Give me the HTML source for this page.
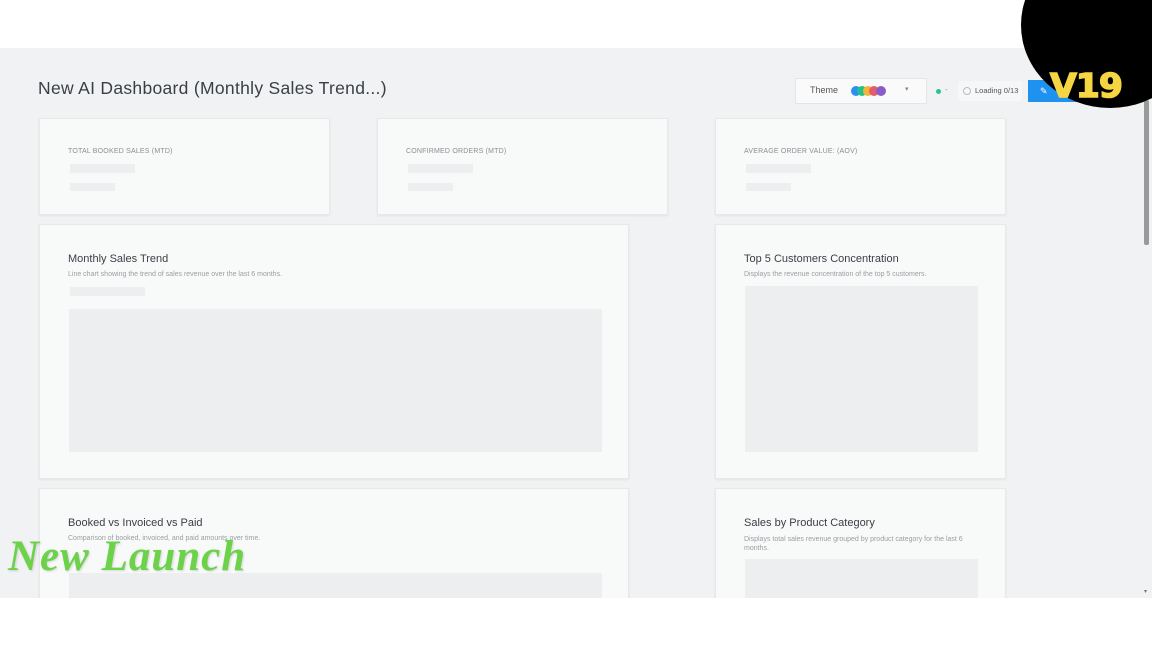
<!DOCTYPE html>
<html><head><style>
*{margin:0;padding:0;box-sizing:border-box}
body{width:1152px;height:648px;overflow:hidden;background:#fff;font-family:"Liberation Sans",sans-serif;position:relative}
.main{position:absolute;left:0;top:48px;width:1152px;height:550px;background:#f1f2f3;overflow:hidden}
.card{position:absolute;background:#f8f9f9;border:1px solid #e6e8ea;box-shadow:0 1px 2px rgba(0,0,0,.06)}
.lbl{position:absolute;font-size:7px;color:#8a8f94;letter-spacing:.2px}
.sk{position:absolute;background:#eceeef}
.t{position:absolute;font-size:11px;color:#3b4046}
.d{position:absolute;font-size:7px;color:#9a9fa4}
</style></head><body>
<div class="main">
<div style="position:absolute;left:38px;top:30px;font-size:17.5px;color:#3a3f45;letter-spacing:.3px">New AI Dashboard (Monthly Sales Trend...)</div>
<div style="position:absolute;left:795px;top:30px;width:132px;height:26px;background:#fafafa;border:1px solid #e3e5e7"></div>
<div style="position:absolute;left:810px;top:37px;font-size:9px;color:#555">Theme</div>
<div style="position:absolute;left:851px;top:38px;width:10px;height:10px;border-radius:50%;background:#2e8ff0"></div>
<div style="position:absolute;left:857px;top:38px;width:10px;height:10px;border-radius:50%;background:#22c38a"></div>
<div style="position:absolute;left:863px;top:38px;width:10px;height:10px;border-radius:50%;background:#f4b43a"></div>
<div style="position:absolute;left:869px;top:38px;width:10px;height:10px;border-radius:50%;background:#e35d6a"></div>
<div style="position:absolute;left:876px;top:38px;width:10px;height:10px;border-radius:50%;background:#8a5cc8"></div>
<div style="position:absolute;left:905px;top:37px;font-size:7px;color:#888">▾</div>
<div style="position:absolute;left:936px;top:41px;width:5px;height:5px;border-radius:50%;background:#2cc38a"></div>
<div style="position:absolute;left:945px;top:37px;font-size:8px;color:#999">-</div>
<div style="position:absolute;left:958px;top:33px;width:64px;height:20px;background:#f6f7f8;border-radius:3px"></div>
<div style="position:absolute;left:963px;top:39px;width:8px;height:8px;border-radius:50%;border:1px solid #bbb"></div>
<div style="position:absolute;left:975px;top:38px;font-size:7.5px;color:#555">Loading 0/13</div>
<div style="position:absolute;left:1028px;top:32px;width:60px;height:22px;background:#1f92f0"></div>
<div style="position:absolute;left:1040px;top:38px;font-size:9px;color:#fff">✎</div>

<div class="card" style="left:39px;top:70px;width:291px;height:97px"></div>
<div class="lbl" style="left:68px;top:100px">TOTAL BOOKED SALES (MTD)</div>
<div class="sk" style="left:70px;top:116px;width:65px;height:9px"></div>
<div class="sk" style="left:70px;top:135px;width:45px;height:8px"></div>
<div class="card" style="left:377px;top:70px;width:291px;height:97px"></div>
<div class="lbl" style="left:406px;top:100px">CONFIRMED ORDERS (MTD)</div>
<div class="sk" style="left:408px;top:116px;width:65px;height:9px"></div>
<div class="sk" style="left:408px;top:135px;width:45px;height:8px"></div>
<div class="card" style="left:715px;top:70px;width:291px;height:97px"></div>
<div class="lbl" style="left:744px;top:100px">AVERAGE ORDER VALUE: (AOV)</div>
<div class="sk" style="left:746px;top:116px;width:65px;height:9px"></div>
<div class="sk" style="left:746px;top:135px;width:45px;height:8px"></div>

<div class="card" style="left:39px;top:176px;width:590px;height:255px"></div>
<div class="t" style="left:68px;top:205px">Monthly Sales Trend</div>
<div class="d" style="left:68px;top:223px">Line chart showing the trend of sales revenue over the last 6 months.</div>
<div class="sk" style="left:70px;top:239px;width:75px;height:9px"></div>
<div class="sk" style="left:69px;top:261px;width:533px;height:143px"></div>
<div class="card" style="left:715px;top:176px;width:291px;height:255px"></div>
<div class="t" style="left:744px;top:205px">Top 5 Customers Concentration</div>
<div class="d" style="left:744px;top:223px">Displays the revenue concentration of the top 5 customers.</div>
<div class="sk" style="left:745px;top:238px;width:233px;height:166px"></div>

<div class="card" style="left:39px;top:440px;width:590px;height:130px"></div>
<div class="t" style="left:68px;top:469px">Booked vs Invoiced vs Paid</div>
<div class="d" style="left:68px;top:487px">Comparison of booked, invoiced, and paid amounts over time.</div>
<div class="sk" style="left:69px;top:525px;width:533px;height:40px"></div>
<div class="card" style="left:715px;top:440px;width:291px;height:130px"></div>
<div class="t" style="left:744px;top:469px">Sales by Product Category</div>
<div class="d" style="left:744px;top:487px;width:240px;line-height:9px">Displays total sales revenue grouped by product category for the last 6 months.</div>
<div class="sk" style="left:745px;top:511px;width:233px;height:50px"></div>

<div style="position:absolute;left:1144px;top:52px;width:5px;height:145px;background:#9a9a9a;border-radius:2px"></div>
<div style="position:absolute;left:1144px;top:540px;font-size:6px;color:#777">▾</div>
</div>
<div style="position:absolute;left:1021px;top:-58px;width:178px;height:166px;border-radius:50%;background:#000"></div>
<div style="position:absolute;left:1050px;top:70px;font-size:33px;font-weight:900;color:#f5d542;font-family:'DejaVu Sans',sans-serif;letter-spacing:-1px;line-height:32px;-webkit-text-stroke:1.5px #f5d542;transform:scaleX(1.05);transform-origin:left">V19</div>
<div style="position:absolute;left:8px;top:532px;font-size:43px;font-style:italic;font-weight:bold;color:#6bd24a;font-family:'Liberation Serif',serif;line-height:50px;letter-spacing:1px;text-shadow:1px 1px 2px rgba(0,0,0,.15)">New Launch</div>
</body></html>
